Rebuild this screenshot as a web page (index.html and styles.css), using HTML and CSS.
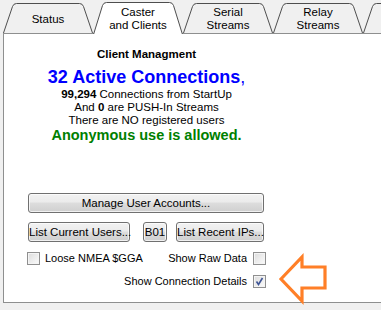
FILE: index.html
```html
<!DOCTYPE html>
<html lang="en">
<head>
    <meta charset="UTF-8">
    <title>Caster and Clients</title>
    <link rel="stylesheet" href="styles.css">
</head>
<body>
    <!-- Tab strip -->
    <div class="tabs">
        <div class="tab">
            <svg class="tab-shape" viewBox="0 0 90 34" width="90" height="34"><path d="M0.5 33 L9.5 6.5 Q10.5 3.5 13.5 3.5 L76.5 3.5 Q79.5 3.5 80.5 6.5 L89.5 33" fill="#f0f0f0" stroke="#4e4e4e"/></svg>
            <div class="tab-label">Status</div>
        </div>
        <div class="tab selected">
            <svg class="tab-shape" viewBox="0 0 90 34" width="90" height="34"><path d="M0.5 34.5 L9.5 5.5 Q10.5 2.5 13.5 2.5 L76.5 2.5 Q79.5 2.5 80.5 5.5 L89.5 34.5" fill="#fff" stroke="#4e4e4e"/></svg>
            <div class="tab-label">Caster<br>and Clients</div>
        </div>
        <div class="tab">
            <svg class="tab-shape" viewBox="0 0 90 34" width="90" height="34"><path d="M0.5 33 L9.5 6.5 Q10.5 3.5 13.5 3.5 L76.5 3.5 Q79.5 3.5 80.5 6.5 L89.5 33" fill="#f0f0f0" stroke="#4e4e4e"/></svg>
            <div class="tab-label">Serial<br>Streams</div>
        </div>
        <div class="tab">
            <svg class="tab-shape" viewBox="0 0 90 34" width="90" height="34"><path d="M0.5 33 L9.5 6.5 Q10.5 3.5 13.5 3.5 L76.5 3.5 Q79.5 3.5 80.5 6.5 L89.5 33" fill="#f0f0f0" stroke="#4e4e4e"/></svg>
            <div class="tab-label">Relay<br>Streams</div>
        </div>
        <div class="tab last">
            <svg class="tab-shape" viewBox="0 0 90 34" width="90" height="34"><path d="M0.5 33 L9.5 6.5 Q10.5 3.5 13.5 3.5 L76.5 3.5 Q79.5 3.5 80.5 6.5 L89.5 33" fill="#f0f0f0" stroke="#4e4e4e"/></svg>
        </div>
    </div>

    <!-- Caster and Clients page -->
    <div class="panel">
        <div class="content">
            <div class="title">Client Managment</div>
            <div class="active">32 Active Connections<span class="comma">,</span></div>
            <div class="line"><b>99,294</b> Connections from StartUp</div>
            <div class="line">And <b>0</b> are PUSH-In Streams</div>
            <div class="line">There are NO registered users</div>
            <div class="anon">Anonymous use is allowed.</div>

            <div class="controls">
                <button class="button wide">Manage User Accounts...</button>
                <div class="button-row">
                    <button class="button users">List Current Users...</button>
                    <button class="button b01">B01</button>
                    <button class="button ips">List Recent IPs...</button>
                </div>
                <div class="check-row">
                    <span class="checkbox"></span>
                    <span class="check-label">Loose NMEA $GGA</span>
                    <span class="check-label right">Show Raw Data</span>
                    <span class="checkbox"></span>
                </div>
                <div class="check-row end">
                    <span class="check-label">Show Connection Details</span>
                    <span class="checkbox checked">
                        <svg viewBox="0 0 13 13" width="13" height="13"><path d="M3.5 6.5 L5.5 9.5 L9.5 3" fill="none" stroke="#3f5595" stroke-width="1.6"/></svg>
                    </span>
                </div>
            </div>
        </div>

        <!-- Orange pointer arrow -->
        <svg class="pointer" viewBox="0 0 52 52" width="52" height="52">
            <path d="M3 26 L24 4 L24 14 L47 14 L47 35 L24 35 L24 48 Z" fill="none" stroke="#ff7f27" stroke-width="3.2" stroke-linejoin="miter"/>
        </svg>
    </div>
</body>
</html>
```

FILE: styles.css
```css
body {
    margin: 0;
    background-color: #f0f0f0;
    font-family: 'Liberation Sans', Arial, sans-serif;
    font-size: 11px;
    color: #000;
    overflow: hidden;
    width: 381px;
    height: 310px;
}
.tabs {
    display: flex;
    height: 34px;
    padding-left: 3px;
    position: relative;
    z-index: 1;
    overflow: hidden;
}
.tab {
    position: relative;
    width: 90px;
    height: 34px;
    flex-shrink: 0;
}
.tab.last {
    width: 18px;
    overflow: hidden;
}
.tab-shape {
    position: absolute;
    left: 0;
    top: 0;
}
.tab-label {
    position: relative;
    height: 30px;
    padding-top: 4px;
    display: flex;
    align-items: center;
    justify-content: center;
    text-align: center;
    line-height: 13px;
    font-size: 11.5px;
}
.panel {
    position: relative;
    margin-top: -1px;
    margin-left: 3px;
    width: 377px;
    height: 268px;
    background: #fff;
    border: 1px solid #8e8f8f;
    border-right: none;
}
.content {
    width: 285px;
    text-align: center;
    padding-top: 13px;
}
.title {
    font-weight: bold;
    font-size: 11.5px;
    line-height: 14px;
}
.active {
    margin-top: 6px;
    font-weight: bold;
    font-size: 18px;
    line-height: 21px;
    color: #0000ff;
}
.comma {
    font-weight: normal;
}
.line {
    font-size: 11.5px;
    line-height: 13px;
}
.anon {
    font-weight: bold;
    font-size: 14.5px;
    line-height: 16px;
    color: #008000;
}
.controls {
    margin-top: 50px;
    padding-left: 24px;
    text-align: left;
}
.button {
    display: block;
    height: 20px;
    padding: 0;
    white-space: nowrap;
    font-family: inherit;
    font-size: 11.5px;
    color: #000;
    border: 1px solid #707070;
    border-radius: 3px;
    background: linear-gradient(#f2f2f2 0%, #ebebeb 45%, #dddddd 50%, #cfcfcf 100%);
    box-shadow: inset 0 0 0 1px rgba(255, 255, 255, 0.7);
}
.button.wide {
    width: 236px;
}
.button-row {
    display: flex;
    margin-top: 9px;
}
.button.users {
    width: 102px;
    margin-right: 13px;
}
.button.b01 {
    width: 24px;
    margin-right: 9px;
}
.button.ips {
    width: 88px;
}
.check-row {
    display: flex;
    align-items: center;
    height: 14px;
    margin-top: 9px;
    margin-left: -1px;
    width: 239px;
}
.check-row.end {
    justify-content: flex-end;
}
.checkbox {
    display: inline-block;
    box-sizing: border-box;
    width: 13px;
    height: 13px;
    border: 1px solid #8f8f8f;
    background: linear-gradient(135deg, #dcdcdc, #fbfbfb);
    box-shadow: inset 0 0 0 1px #f4f4f4;
}
.checkbox svg {
    display: block;
    margin: -1px;
}
.check-label {
    font-size: 11px;
    margin-left: 5px;
    white-space: nowrap;
}
.check-label.right {
    margin-left: auto;
    margin-right: 6px;
}
.check-row.end .check-label {
    margin-right: 6px;
}
.pointer {
    position: absolute;
    left: 274px;
    top: 219px;
}
```
